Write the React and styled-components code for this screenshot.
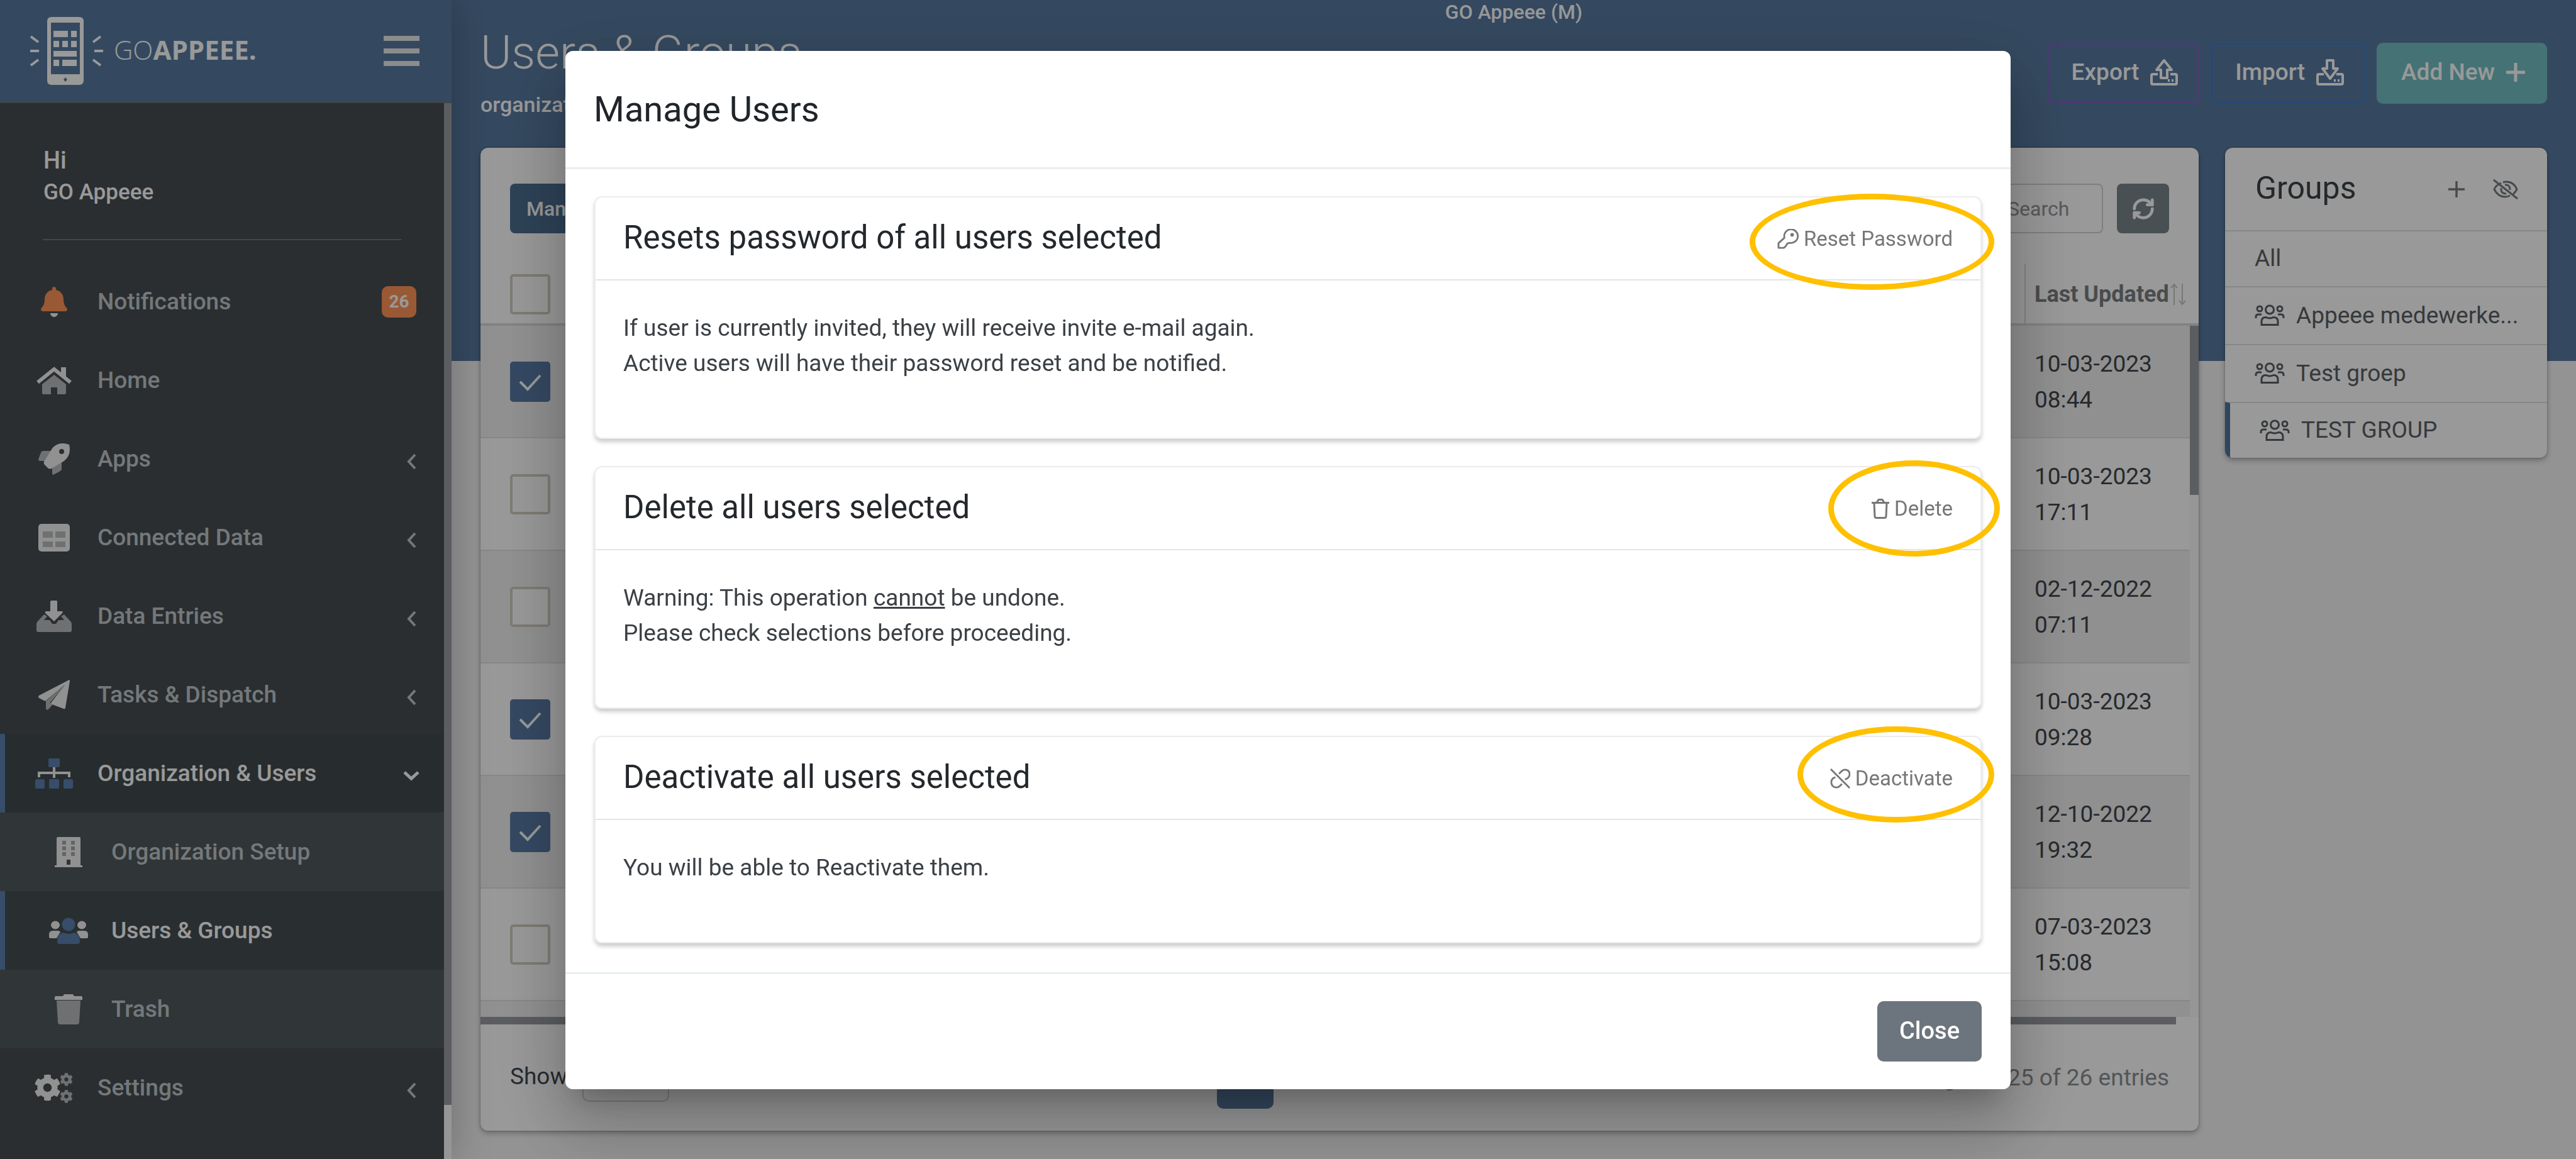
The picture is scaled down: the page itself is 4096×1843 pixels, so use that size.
import React from "react";
import styled, { createGlobalStyle, css } from "styled-components";
import { FaCog } from "react-icons/fa";
import { RefreshCw } from "lucide-react";

const GlobalStyle = createGlobalStyle`
  *, *::before, *::after { box-sizing: border-box; }
  html, body { margin: 0; padding: 0; overflow: hidden; }
  body { font-family: Roboto, "Open Sans", sans-serif; font-size: 37px; color: #41474d; background: #f5f5f5; }
  button, input, select { font-family: inherit; margin: 0; }
  h1, h2, h3, p, ul { margin: 0; padding: 0; font-weight: 400; }
  ul { list-style: none; }
  svg { display: block; flex: none; }
`;

/* ---------- page frame ---------- */

const Page = styled.div`
  display: flex;
  height: 100vh;
  overflow: hidden;
`;

const Sidebar = styled.aside`
  flex: none;
  width: 718px;
  display: flex;
  flex-direction: column;
  background: #464e52;
  box-shadow: 0 0 60px rgba(0, 0, 0, 0.25);
  z-index: 1;
`;

const Brand = styled.header`
  display: flex;
  align-items: center;
  height: 164px;
  padding: 0 51px 0 48px;
  background: #587aa0;
  border-bottom: 2px solid #6b7176;
`;

const BrandName = styled.span`
  flex: 1;
  margin-left: 17px;
  padding-bottom: 4px;
  font-family: "Open Sans", sans-serif;
  font-size: 42px;
  line-height: 60px;
  font-weight: 300;
  color: #fff;

  b { font-weight: 700; }
`;

const MenuButton = styled.button`
  display: flex;
  flex-direction: column;
  gap: 12px;
  width: 57px;
  padding: 0;
  border: 0;
  background: none;

  i { display: block; height: 8px; background: #e8e9ea; }
`;

const SideBody = styled.div`
  flex: 1;
  display: flex;
`;

const SideContent = styled.div`
  flex: 1;
`;

const Rail = styled.div`
  width: 12px;
  background: #fafafa;
  padding-bottom: 86px;

  &::before { content: ""; display: block; height: 100%; background: #989ba2; }
`;

const Greeting = styled.div`
  margin: 0 68px 35px;
  padding: 65px 0 49px 1px;
  border-bottom: 2px solid #6f7579;
  color: #fff;
  font-size: 38px;
  line-height: 52px;
  font-weight: 500;

  strong { display: block; font-size: 35px; line-height: 50px; font-weight: 500; }
`;

const NavLink = styled.a`
  display: flex;
  align-items: center;
  height: 125px;
  padding-right: 44px;
  border-left: 8px solid transparent;
  text-decoration: none;
  color: #c2c8cb;
  background: ${(p) => (p.$sub ? "#51595c" : "transparent")};
  font-weight: 500;

  ${(p) =>
    p.$active &&
    css`
      color: #fff;
      background: ${p.$sub ? "#454d50" : "#424a4d"};
      border-left-color: #5c80b0;
    `}
`;

const NavIcon = styled.span`
  display: flex;
  justify-content: center;
  width: 155px;
  padding-left: ${(p) => (p.$sub ? "46px" : "0")};
  margin-right: ${(p) => (p.$sub ? "14px" : "-8px")};
`;

const NavLabel = styled.span`
  flex: 1;
`;

const Caret = styled.span`
  display: flex;
  justify-content: center;
  width: 28px;
  margin-right: -6px;
  padding-top: 8px;
`;

const Badge = styled.span`
  width: 55px;
  border-radius: 10px;
  background: #ff9559;
  color: #fff;
  font-size: 28px;
  line-height: 50px;
  font-weight: 700;
  text-align: center;
`;

/* ---------- main area ---------- */

const Main = styled.main`
  flex: 1;
  min-width: 0;
  display: flex;
  flex-direction: column;
  padding: 0 46px 45px;
  background: linear-gradient(#587aa0 574px, #f5f5f5 574px);
`;

const Tenant = styled.div`
  height: 38px;
  font-size: 32px;
  line-height: 38px;
  font-weight: 500;
  color: #fff;
  text-align: center;
`;

const PageHead = styled.div`
  display: flex;
  justify-content: space-between;
  height: 197px;
  color: #fff;

  h1 { font-size: 75px; line-height: 90px; font-weight: 300; }
  p { font-size: 34px; line-height: 76px; font-weight: 500; }
`;

const HeadActions = styled.div`
  display: flex;
  align-items: flex-start;
  gap: 17px;
  padding-top: 30px;
`;

const HeadButton = styled.button`
  display: flex;
  align-items: center;
  gap: 18px;
  height: 97px;
  padding: 0 32px 4px 36px;
  border: 3px solid ${(p) => p.$line};
  border-radius: 10px;
  background: ${(p) => p.$fill || "transparent"};
  color: #fff;
  font-size: 37px;
  font-weight: 500;
`;

const Columns = styled.div`
  flex: 1;
  display: grid;
  grid-template-columns: 1fr 512px;
  gap: 42px;
  align-items: stretch;
`;

const panel = css`
  background: #fff;
  border-radius: 12px;
  box-shadow: 0 4px 8px rgba(0, 0, 0, 0.28), 0 0 3px rgba(0, 0, 0, 0.25);
  overflow: hidden;
`;

const TableCard = styled.section`
  ${panel}
  display: flex;
  flex-direction: column;
`;

const Toolbar = styled.div`
  display: flex;
  padding: 57px 47px 48px;
`;

const ToolButton = styled.button`
  display: flex;
  align-items: center;
  justify-content: center;
  height: 79px;
  min-width: 83px;
  padding: 0 ${(p) => (p.$icon ? "20px" : "26px")};
  border: 0;
  border-radius: 8px;
  background: ${(p) => (p.$icon ? "#7b858d" : "#4d6f92")};
  color: #fff;
  font-size: 32px;
  font-weight: 500;
`;

const SearchBox = styled.input`
  width: 178px;
  height: 79px;
  margin: 0 22px 0 auto;
  padding: 0 24px;
  border: 2px solid #cfd4da;
  border-radius: 8px;
  color: #41474d;
  font-size: 32px;

  &::placeholder { color: #8f9499; opacity: 1; }
`;

const TableWrap = styled.div`
  position: relative;
  height: 1198px;
  overflow: hidden;
`;

const Table = styled.table`
  width: 100%;
  border-collapse: separate;
  border-spacing: 0;
  table-layout: fixed;
`;

const Th = styled.th`
  height: 99px;
  padding: 2px 0 0 ${(p) => (p.$date ? "14px" : "47px")};
  width: ${(p) => p.$w || "auto"};
  border-bottom: 4px solid #d8dadd;
  border-left: ${(p) => (p.$date ? "2px solid #d8dadd" : "0")};
  font-size: 36px;
  font-weight: 700;
  text-align: left;
  white-space: nowrap;
  color: #7a7f83;
`;

const Sortable = styled.span`
  display: flex;
  align-items: center;
`;

const Td = styled.td`
  height: 179px;
  padding: 0 0 0 ${(p) => (p.$date ? "16px" : "47px")};
  border-bottom: 2px solid #dfe2e4;
  line-height: 57px;
`;

const Tr = styled.tr`
  &:nth-child(odd) { background: #f1f1f1; }
`;

const Tick = styled.input`
  appearance: none;
  display: block;
  width: 64px;
  height: 64px;
  margin: 0;
  border: 4px solid #d3cdc2;
  border-radius: 5px;
  background: #fff;

  &:checked {
    border-color: #587aa5;
    background: #587aa5 url("data:image/svg+xml,%3Csvg xmlns='http://www.w3.org/2000/svg' viewBox='0 0 56 56' fill='none' stroke='white' stroke-width='4'%3E%3Cpath d='M12 28l12 12 20-22'/%3E%3C/svg%3E") center / 100% no-repeat;
  }
`;

const BodyRail = styled.div`
  position: absolute;
  top: 99px;
  right: 0;
  bottom: 0;
  width: 14px;
  background: #fafafa;

  &::before { content: ""; display: block; height: 269px; background: #989ba2; }
`;

const FootRail = styled.div`
  height: 12px;
  padding-right: 36px;

  &::before { content: ""; display: block; height: 100%; background: #989ba2; }
`;

const TableFoot = styled.div`
  flex: 1;
  display: grid;
  grid-template-columns: 15fr auto 19fr;
  align-items: center;
  padding: 0 47px;

  label { display: flex; align-items: center; gap: 24px; padding-bottom: 4px; }
  p { text-align: right; color: #8a8f93; }
`;

const SizeSelect = styled.select`
  width: 138px;
  height: 80px;
  border: 2px solid #cfd4da;
  border-radius: 10px;
  background: #fff;
  font-size: 31px;
  color: #41474d;
`;

const PageButton = styled.button`
  width: 90px;
  height: 98px;
  border: 0;
  border-radius: 10px;
  background: #587aa0;
  color: #fff;
  font-size: 37px;
`;

/* ---------- groups panel ---------- */

const GroupsCard = styled.section`
  ${panel}
  align-self: start;
`;

const GroupsHead = styled.div`
  display: flex;
  align-items: center;
  height: 131px;
  padding: 0 45px 0 48px;

  h2 { flex: 1; font-size: 50px; line-height: 60px; color: #3d4348; padding-bottom: 4px; }
`;

const IconButton = styled.button`
  display: flex;
  padding: 0;
  margin-left: 44px;
  border: 0;
  background: none;
  color: #777c80;
`;

const GroupRow = styled.li`
  display: flex;
  align-items: center;
  gap: 18px;
  height: ${(p) => (p.$tall ? "92px" : "89px")};
  padding: 0 40px 2px 47px;
  border-top: 2px solid #dfe2e4;
  ${(p) => p.$active && "border-left: 8px solid #4d759f;"}
  color: #5b6065;
  white-space: nowrap;
`;

/* ---------- dialog ---------- */

const Backdrop = styled.div`
  position: fixed;
  inset: 0;
  z-index: 5;
  padding-top: 81px;
  background: rgba(0, 0, 0, 0.4);
`;

const Dialog = styled.div`
  width: 2298px;
  max-width: 100%;
  margin: 0 auto;
  border-radius: 12px;
  background: #fff;
  box-shadow:
    0 29px 39px -18px rgba(0, 0, 0, 0.2),
    0 63px 99px 8px rgba(0, 0, 0, 0.14),
    0 24px 120px 21px rgba(0, 0, 0, 0.12);
`;

const DialogHead = styled.div`
  display: flex;
  align-items: center;
  height: 188px;
  padding: 0 45px;
  border-bottom: 3px solid #ebeef1;

  h2 { font-size: 56px; line-height: 66px; color: #212529; }
`;

const DialogBody = styled.div`
  display: flex;
  flex-direction: column;
  gap: 43px;
  padding: 43px 46px 46px;
`;

const DialogFoot = styled.div`
  display: flex;
  justify-content: flex-end;
  padding: 43px 46px 44px;
  border-top: 3px solid #e9eeee;
`;

const CloseButton = styled.button`
  height: 96px;
  padding: 0 35px 2px;
  border: 0;
  border-radius: 10px;
  background: #6c757d;
  color: #fff;
  font-size: 38px;
  font-weight: 500;
`;

const Card = styled.section`
  position: relative;
  border: 2px solid #ececec;
  border-radius: 12px;
  box-shadow: 0 5px 6px rgba(0, 0, 0, 0.2);
`;

const CardHead = styled.div`
  display: flex;
  align-items: center;
  justify-content: space-between;
  height: 132px;
  padding: 0 44px 2px;
  border-bottom: 2px solid #e4e5e6;

  h3 { font-size: 51px; line-height: 60px; color: #24282c; }
`;

const CardAction = styled.button`
  display: flex;
  align-items: center;
  gap: 8px;
  padding: 3px 0 0;
  border: 0;
  background: none;
  color: #777;
  font-size: 33px;
  line-height: 40px;
`;

const CardText = styled.p`
  padding: 48px 44px 90px;
  color: #3b4045;
  font-size: 37px;
  line-height: 56px;
`;

const Highlight = styled.span`
  position: absolute;
  top: ${(p) => p.$top}px;
  right: ${(p) => p.$right}px;
  width: ${(p) => p.$w}px;
  height: 153px;
  border: 9px solid #ffc000;
  border-radius: 50%;
  pointer-events: none;
`;

/* ---------- icons ---------- */

const Icon = ({ w, h, vb, children, ...rest }) => (
  <svg width={w} height={h} viewBox={vb} fill="currentColor" aria-hidden="true" {...rest}>
    {children}
  </svg>
);

const LIGHT = "#f2f2f2";
const SHADE = "#b9bbbd";
const BLUE = "#5c80b0";

const PhoneLogo = () => (
  <Icon w={116} h={108} vb="0 0 116 108" color="#fff">
    <path
      fillRule="evenodd"
      d="M34 0h44q7 0 7 7v94q0 7-7 7H34q-7 0-7-7V7q0-7 7-7zM33 9v82h46V9zM56 96l-3 3.500 3 3.500 3-3.500z"
    />
    <path d="M37 22h23v10H37zM65 22h9v10h-9zM37 38h9v10h-9zM51 38h9v10h-9zM65 38h9v10h-9zM37 54h37v9H37zM37 68h9v10h-9zM51 68h23v10H51z" />
    <path
      fill="none"
      stroke="currentColor"
      strokeWidth="4"
      d="M1 31l12 9M0 54h14M1 77l12-9M112 31l-12 9M102 54h14M112 77l-12-9"
    />
  </Icon>
);

const BellIcon = () => (
  <Icon w={42} h={48} vb="0 0 448 512">
    <path fill="#ff9559" d="M439.390 362.290c-19.320-20.760-55.470-51.990-55.470-154.290 0-77.700-54.480-139.900-127.940-155.160V32c0-17.670-14.320-32-31.980-32s-31.980 14.330-31.980 32v20.840C118.560 68.100 64.080 130.300 64.080 208c0 102.300-36.150 133.530-55.470 154.290-6 6.450-8.660 14.160-8.610 21.710.11 16.400 12.980 32 32.100 32h383.800c19.120 0 32-15.600 32.100-32 .05-7.550-2.610-15.270-8.610-21.710z" />
    <path fill={LIGHT} d="M224 512c35.320 0 63.970-28.650 63.970-64H160.030c0 35.350 28.650 64 63.970 64z" />
  </Icon>
);

const HomeIcon = () => (
  <Icon w={56} h={44} vb="0 0 56 44">
    <path fill={SHADE} d="M28 13L47 28v14q0 2-2 2H33V33H23v11H11q-2 0-2-2V28z" />
    <path fill="none" stroke={LIGHT} strokeWidth="6" d="M2 25L28 4l26 21" />
    <path fill={LIGHT} d="M39 1h8v18l-8-7z" />
  </Icon>
);

const RocketIcon = () => (
  <Icon w={50} h={50} vb="0 0 50 50">
    <path fill={SHADE} d="M20 12H8q-3 0-4 3L0 25q0 3 3 3h10zM37 30v11q0 2-2 3l-11 6q-2 0-2-3V37z" />
    <path fill={LIGHT} d="M49 2Q32-4 22 8L9 29q-1 3 1 5l6 6q2 1 5 0l20-12Q53 18 49 2zM37 17a4 4 0 110-8 4 4 0 010 8z" fillRule="evenodd" />
  </Icon>
);

const TableIcon = () => (
  <Icon w={50} h={44} vb="0 0 50 44">
    <rect width="50" height="44" rx="5" fill={LIGHT} />
    <path fill={SHADE} d="M7 12h16v10H7zM27 12h16v10H27zM7 28h16v9H7zM27 28h16v9H27z" />
  </Icon>
);

const InboxIcon = () => (
  <Icon w={56} h={50} vb="0 0 56 50">
    <path fill={SHADE} d="M12 22l5 3-5 6h9l4 6h6l4-6h9l-5-6 5-3 11 12q1 2 1 4v9q0 3-3 3H3q-3 0-3-3v-9q0-2 1-4z" />
    <path fill={LIGHT} d="M24 0h8q1 0 1 2v15h7q3 0 1 3L28 33 14 20q-1-3 2-3h6V2q0-2 2-2z" />
  </Icon>
);

const PlaneIcon = () => (
  <Icon w={50} h={48} vb="0 0 50 48">
    <path fill={LIGHT} d="M49 0L1 25q-2 2 0 4l10 5L42 8 19 38l21 8q3 1 3-2L50 2q0-2-1-2z" />
    <path fill={SHADE} d="M42 8L12 34v12q1 3 4 1l7-8-5-2z" />
  </Icon>
);

const SitemapIcon = () => (
  <Icon w={60} h={48} vb="0 0 60 48">
    <path fill="none" stroke={LIGHT} strokeWidth="4" d="M30 13v18M6 30v-7h48v7" />
    <path fill={BLUE} d="M23 0h14q2 0 2 2v10q0 2-2 2H23q-2 0-2-2V2q0-2 2-2zM2 33h11q2 0 2 2v11q0 2-2 2H2q-2 0-2-2V35q0-2 2-2zM24 33h12q2 0 2 2v11q0 2-2 2H24q-2 0-2-2V35q0-2 2-2zM47 33h11q2 0 2 2v11q0 2-2 2H47q-2 0-2-2V35q0-2 2-2z" />
  </Icon>
);

const BuildingIcon = () => (
  <Icon w={44} h={48} vb="0 0 44 48">
    <path fill={LIGHT} d="M5 0h34q2 0 2 2v43h3v3H0v-3h3V2q0-2 2-2zM19 36v8h6v-8z" fillRule="evenodd" />
    <path fill="#a4a7a9" d="M12 6h6v6h-6zM26 6h6v6h-6zM12 15h6v6h-6zM26 15h6v6h-6zM12 24h6v6h-6zM26 24h6v6h-6z" />
  </Icon>
);

const UsersIcon = () => (
  <Icon w={62} h={42} vb="0 0 62 42">
    <g fill={LIGHT}>
      <ellipse cx="10" cy="12" rx="7" ry="6.500" />
      <ellipse cx="52" cy="12" rx="7" ry="6.500" />
      <path d="M6 21h8q3 0 4 2l-6 10H2q-2 0-2-2v-4q0-6 6-6zM56 21h-8q-3 0-4 2l6 10h10q2 0 2-2v-4q0-6-6-6z" />
    </g>
    <g fill={BLUE}>
      <circle cx="31" cy="11" r="10.500" />
      <path d="M22 24q9 4 18 0 9 2 9 14 0 4-4 4H17q-4 0-4-4 0-12 9-14z" />
    </g>
  </Icon>
);

const TrashIcon = () => (
  <Icon w={44} h={48} vb="0 0 44 48">
    <path fill={SHADE} d="M3 10h38l-2 34q0 4-4 4H9q-4 0-4-4z" />
    <path fill={LIGHT} d="M15 0h14l2 3h11q2 0 2 2v4H0V5q0-2 2-2h11z" />
  </Icon>
);

const CogsIcon = () => (
  <Icon w={62} h={48} vb="0 0 62 48">
    <FaCog x="-1" y="2" size="43" color={LIGHT} />
    <FaCog x="40" y="0" size="21" color={SHADE} />
    <FaCog x="40" y="27" size="21" color={SHADE} />
  </Icon>
);

const ChevronIcon = ({ down }) => (
  <Icon
    w={down ? 28 : 17}
    h={down ? 17 : 26}
    vb={down ? "0 0 28 17" : "0 0 17 26"}
    fill="none"
    stroke="currentColor"
    strokeWidth={down ? 5 : 4}
  >
    <path d={down ? "M3 3l11 10L25 3" : "M14 2L4 13l10 11"} />
  </Icon>
);

const PlusIcon = ({ size, stroke }) => (
  <Icon w={size} h={size} vb="0 0 30 30" fill="none" stroke="currentColor" strokeWidth={stroke}>
    <path d="M15 0v30M0 15h30" />
  </Icon>
);

const PeopleIcon = () => (
  <Icon w={48} h={34} vb="0 0 48 34" fill="none" stroke="currentColor" strokeWidth="3">
    <circle cx="8" cy="7" r="4" />
    <circle cx="40" cy="7" r="4" />
    <circle cx="24" cy="8.500" r="6.500" />
    <path d="M2 22v-2q0-4 4-4h5M46 22v-2q0-4-4-4h-5M11 32.500v-5q0-7 7-7 6 3 12 0 7 0 7 7v5z" />
  </Icon>
);

const TransferIcon = ({ up }) => (
  <Icon w={44} h={42} vb="1 0 44 42" fill="none" stroke="currentColor" strokeWidth="4" strokeLinejoin="round">
    {up ? <path d="M23 2L35 17H28V30H18V17H11z" /> : <path d="M18 2h10v13h7L23 31 11 15h7z" />}
    <path d="M13 24H5q-2 0-2 2v12q0 2 2 2h36q2 0 2-2V26q0-2-2-2h-8" />
    <path d="M29 34h3M35 34h3" />
  </Icon>
);

const HideIcon = () => (
  <Icon w={42} h={34} vb="0 0 42 34" fill="none" stroke="currentColor" strokeWidth="3">
    <path d="M14 7Q5 11 3 17q6 12 17 12 4 0 8-2M17 6q3-1 5-1 12 0 17 12-2 4-6 8" />
    <path d="M14 15q-1 9 8 9M20 10q8-1 8 8" />
    <path d="M2 2l38 30" />
  </Icon>
);

const KeyIcon = () => (
  <Icon w={34} h={32} vb="0 0 36 34" fill="none" stroke="currentColor" strokeWidth="3" strokeLinejoin="round">
    <path d="M2 32v-8l10-9a11.500 11.500 0 119 8.500l-4 1-3 5-3 2.500z" />
    <circle cx="25" cy="10" r="3" fill="currentColor" stroke="none" />
  </Icon>
);

const BinIcon = () => (
  <Icon w={28} h={32} vb="0 0 28 32" fill="none" stroke="currentColor" strokeWidth="3">
    <path d="M0 6.500h28M8 6l3-4.500h6L20 6M4 7l1 21q0 2.500 3 2.500h12q3 0 3-2.500l1-21" />
  </Icon>
);

const UnlinkIcon = () => (
  <Icon w={32} h={32} vb="0 0 34 34" fill="none" stroke="currentColor" strokeWidth="3">
    <path d="M15 9l4-4q3-3 7-3 7 1 7 8 0 3-3 6-2 2-5 2.500M9 15q-7 1-7 9 1 8 9 8 3 0 5-2l4-4" />
    <path d="M1 1l32 32" />
  </Icon>
);

const SortIcon = () => (
  <Icon w={28} h={38} vb="0 0 28 38" fill="none" stroke="#c3c6c9" strokeWidth="2">
    <path d="M8 36V3M3 9l5-6 5 6M21 2v33M16 29l5 6 5-6" />
  </Icon>
);

/* ---------- data ---------- */

const NAV = [
  { label: "Notifications", icon: BellIcon, badge: "26" },
  { label: "Home", icon: HomeIcon },
  { label: "Apps", icon: RocketIcon, more: true },
  { label: "Connected Data", icon: TableIcon, more: true },
  { label: "Data Entries", icon: InboxIcon, more: true },
  { label: "Tasks & Dispatch", icon: PlaneIcon, more: true },
  { label: "Organization & Users", icon: SitemapIcon, open: true, active: true },
  { label: "Organization Setup", icon: BuildingIcon, sub: true },
  { label: "Users & Groups", icon: UsersIcon, sub: true, active: true },
  { label: "Trash", icon: TrashIcon, sub: true },
  { label: "Settings", icon: CogsIcon, more: true },
];

const ROWS = [
  { date: "10-03-2023", time: "08:44", checked: true },
  { date: "10-03-2023", time: "17:11" },
  { date: "02-12-2022", time: "07:11" },
  { date: "10-03-2023", time: "09:28", checked: true },
  { date: "12-10-2022", time: "19:32", checked: true },
  { date: "07-03-2023", time: "15:08" },
  { date: "", time: "" },
];

const GROUPS = [
  { name: "Appeee medewerke...", tall: true },
  { name: "Test groep", tall: true },
  { name: "TEST GROUP", active: true },
];

const ACTIONS = [
  {
    title: "Resets password of all users selected",
    button: "Reset Password",
    icon: <KeyIcon />,
    mark: { $top: -6, $right: -22, $w: 389 },
    text: (
      <>
        If user is currently invited, they will receive invite e-mail again.
        <br />
        Active users will have their password reset and be notified.
      </>
    ),
  },
  {
    title: "Delete all users selected",
    button: "Delete",
    icon: <BinIcon />,
    mark: { $top: -11, $right: -31, $w: 273 },
    text: (
      <>
        Warning: This operation <u>cannot</u> be undone.
        <br />
        Please check selections before proceeding.
      </>
    ),
  },
  {
    title: "Deactivate all users selected",
    button: "Deactivate",
    icon: <UnlinkIcon />,
    mark: { $top: -17, $right: -22, $w: 313 },
    text: "You will be able to Reactivate them.",
  },
];

export default function App() {
  return (
    <>
      <GlobalStyle />
      <Page>
        <Sidebar>
          <Brand>
            <PhoneLogo />
            <BrandName>
              GO<b>APPEEE.</b>
            </BrandName>
            <MenuButton aria-label="Menu">
              <i />
              <i />
              <i />
            </MenuButton>
          </Brand>
          <SideBody>
            <SideContent>
              <Greeting>
                Hi
                <strong>GO Appeee</strong>
              </Greeting>
              <nav>
                {NAV.map(({ label, icon: Glyph, badge, more, open, sub, active }) => (
                  <NavLink key={label} href="#" $sub={sub} $active={active}>
                    <NavIcon $sub={sub}>
                      <Glyph />
                    </NavIcon>
                    <NavLabel>{label}</NavLabel>
                    {badge && <Badge>{badge}</Badge>}
                    {(more || open) && (
                      <Caret>
                        <ChevronIcon down={open} />
                      </Caret>
                    )}
                  </NavLink>
                ))}
              </nav>
            </SideContent>
            <Rail />
          </SideBody>
        </Sidebar>

        <Main>
          <Tenant>GO Appeee (M)</Tenant>
          <PageHead>
            <div>
              <h1>Users &amp; Groups</h1>
              <p>organization</p>
            </div>
            <HeadActions>
              <HeadButton $line="#7f60c4">
                Export <TransferIcon up />
              </HeadButton>
              <HeadButton $line="#3d7cc6">
                Import <TransferIcon />
              </HeadButton>
              <HeadButton $line="#74bfc3" $fill="#74bfc3">
                Add New <PlusIcon size={30} stroke={5} />
              </HeadButton>
            </HeadActions>
          </PageHead>

          <Columns>
            <TableCard>
              <Toolbar>
                <ToolButton>Manage</ToolButton>
                <SearchBox type="search" placeholder="Search" aria-label="Search" />
                <ToolButton $icon aria-label="Refresh">
                  <RefreshCw size={38} strokeWidth={3} />
                </ToolButton>
              </Toolbar>
              <TableWrap>
                <Table>
                  <thead>
                    <tr>
                      <Th>
                        <Tick type="checkbox" aria-label="Select all" />
                      </Th>
                      <Th $date $w="277px">
                        <Sortable>
                          Last Updated
                          <SortIcon />
                        </Sortable>
                      </Th>
                    </tr>
                  </thead>
                  <tbody>
                    {ROWS.map((row, i) => (
                      <Tr key={i}>
                        <Td>
                          {row.date && <Tick type="checkbox" defaultChecked={row.checked} aria-label="Select user" />}
                        </Td>
                        <Td $date>
                          {row.date}
                          <br />
                          {row.time}
                        </Td>
                      </Tr>
                    ))}
                  </tbody>
                </Table>
                <BodyRail />
              </TableWrap>
              <FootRail />
              <TableFoot>
                <label>
                  Show
                  <SizeSelect defaultValue="25">
                    <option>25</option>
                  </SizeSelect>
                </label>
                <PageButton>1</PageButton>
                <p>Showing 1 to 25 of 26 entries</p>
              </TableFoot>
            </TableCard>

            <GroupsCard>
              <GroupsHead>
                <h2>Groups</h2>
                <IconButton aria-label="Add group">
                  <PlusIcon size={26} stroke={4} />
                </IconButton>
                <IconButton aria-label="Hide groups">
                  <HideIcon />
                </IconButton>
              </GroupsHead>
              <ul>
                <GroupRow>All</GroupRow>
                {GROUPS.map((g) => (
                  <GroupRow key={g.name} $tall={g.tall} $active={g.active}>
                    <PeopleIcon />
                    {g.name}
                  </GroupRow>
                ))}
              </ul>
            </GroupsCard>
          </Columns>
        </Main>
      </Page>

      <Backdrop>
        <Dialog role="dialog" aria-labelledby="dialog-title">
          <DialogHead>
            <h2 id="dialog-title">Manage Users</h2>
          </DialogHead>
          <DialogBody>
            {ACTIONS.map((a) => (
              <Card key={a.title}>
                <CardHead>
                  <h3>{a.title}</h3>
                  <CardAction>
                    {a.icon}
                    {a.button}
                  </CardAction>
                </CardHead>
                <CardText>{a.text}</CardText>
                <Highlight {...a.mark} />
              </Card>
            ))}
          </DialogBody>
          <DialogFoot>
            <CloseButton>Close</CloseButton>
          </DialogFoot>
        </Dialog>
      </Backdrop>
    </>
  );
}
